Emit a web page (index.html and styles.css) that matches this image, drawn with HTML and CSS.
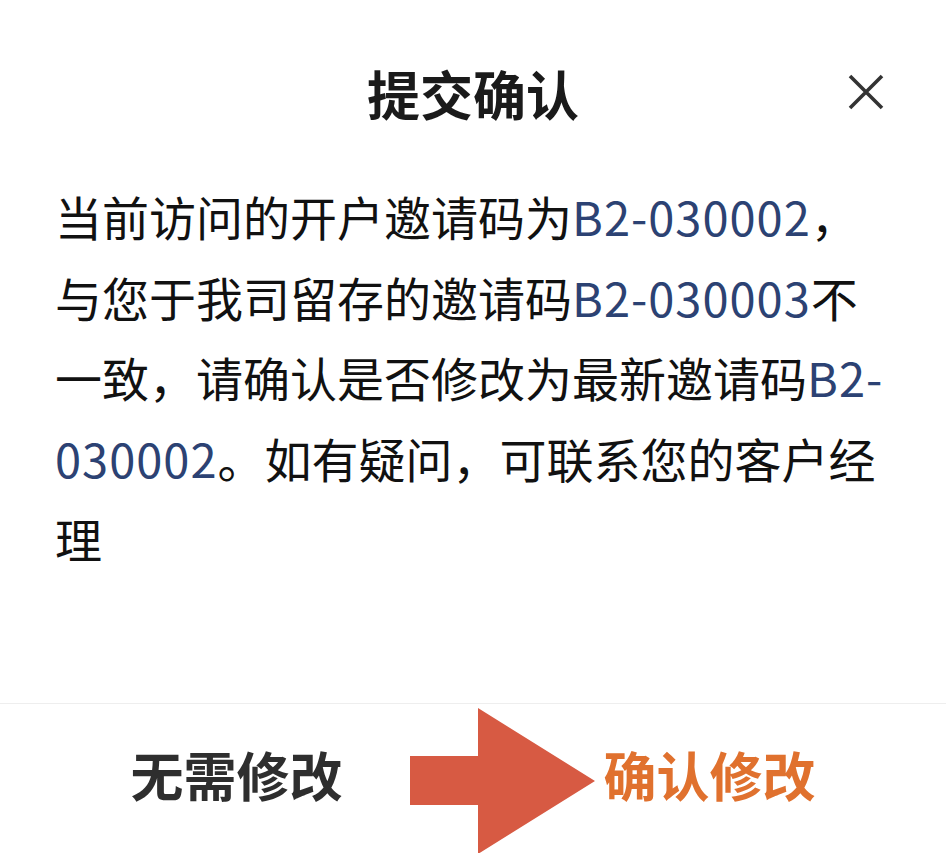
FILE: index.html
```html
<!DOCTYPE html>
<html lang="zh-CN">
<head>
<meta charset="utf-8">
<title>提交确认</title>
<link rel="stylesheet" href="styles.css">
</head>
<body>
<div class="dialog">
  <header class="header">
    <span></span>
    <h1 class="title">提交确认</h1>
    <button class="close" aria-label="关闭">
      <svg width="36" height="36" viewBox="0 0 36 36"><path d="M2 2 L34 34 M34 2 L2 34" stroke="#333" stroke-width="3.6" fill="none"/></svg>
    </button>
  </header>
  <p class="message">当前访问的开户邀请码为<span class="code">B2-030002</span>，<br>与您于我司留存的邀请码<span class="code">B2-030003</span>不<br>一致，请确认是否修改为最新邀请码<span class="code">B2-</span><br><span class="code">030002</span>。如有疑问，可联系您的客户经<br>理</p>
  <footer class="actions">
    <button class="btn btn-cancel">无需修改</button>
    <button class="btn btn-confirm">确认修改</button>
    <svg class="arrow" width="186" height="146" viewBox="0 0 186 146"><polygon points="0,48 68,48 68,0 185,73 68,146 68,97 0,97" fill="#d75a43"/></svg>
  </footer>
</div>
</body>
</html>
```

FILE: styles.css
```css
* { box-sizing: border-box; }
html, body { margin: 0; padding: 0; background: #fff; }
body {
  font-family: "Noto Sans CJK SC", "Noto Sans", sans-serif;
  width: 946px;
  height: 853px;
  overflow: hidden;
}
.dialog {
  display: flex;
  flex-direction: column;
  height: 853px;
}
.header {
  display: grid;
  grid-template-columns: 1fr auto 1fr;
  align-items: center;
  padding: 64px 62px 0 62px;
  height: 122px;
}
.title {
  margin: 0;
  font-size: 53px;
  line-height: 56px;
  font-weight: 700;
  color: #1a1a1a;
  letter-spacing: 0;
}
.close {
  justify-self: end;
  border: 0;
  background: none;
  padding: 0;
  width: 36px;
  height: 36px;
  display: flex;
  margin-top: -2px;
}
.message {
  margin: 54px 0 0 0;
  padding: 0 40px 0 55px;
  font-size: 47px;
  line-height: 80.6px;
  color: #111;
  font-weight: 400;
  white-space: nowrap;
}
.code {
  color: #2c4273;
  letter-spacing: 1px;
}
.actions {
  position: relative;
  margin-top: auto;
  height: 150px;
  border-top: 1px solid #eeeeee;
  display: flex;
}
.btn {
  flex: 1;
  border: 0;
  background: none;
  font-family: inherit;
  font-size: 53px;
  font-weight: 700;
  padding: 0;
  padding-bottom: 9px;
}
.btn-cancel { color: #2e2e2e; }
.btn-confirm { color: #e0712e; }
.arrow {
  position: absolute;
  left: 410px;
  top: 4px;
}
```
